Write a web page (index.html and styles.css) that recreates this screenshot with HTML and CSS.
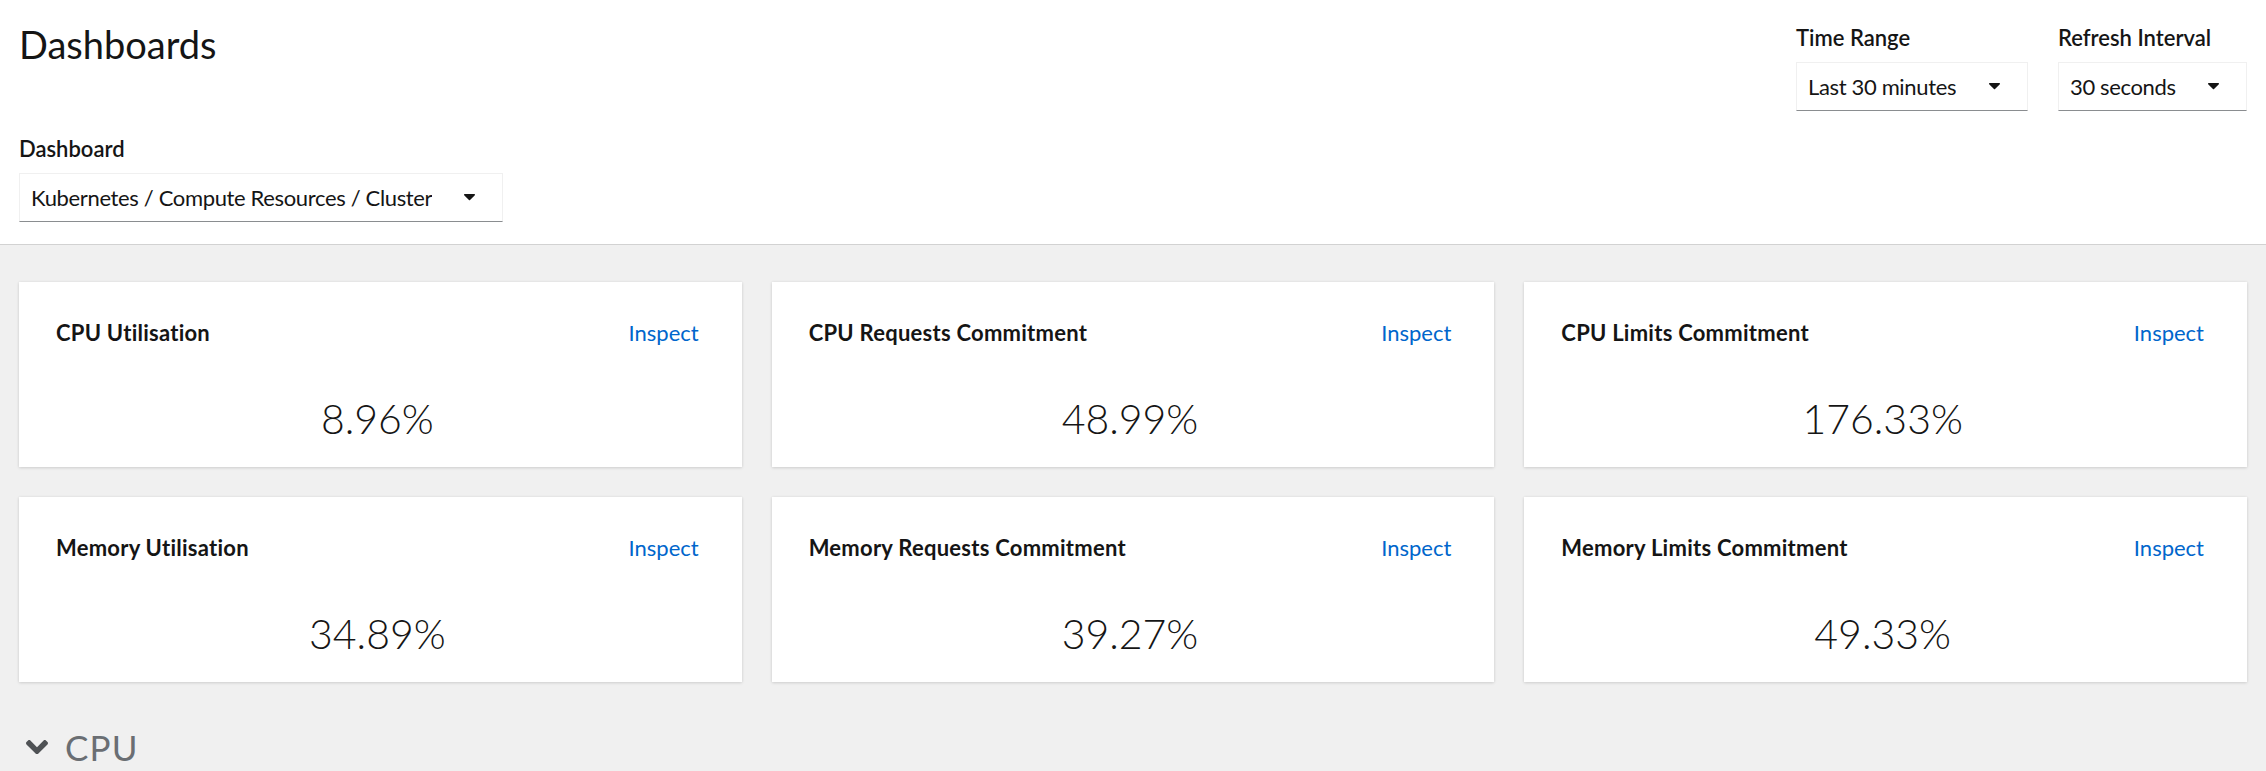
FILE: index.html
```html
<!DOCTYPE html>
<html lang="en">
<head>
<meta charset="utf-8">
<title>Dashboards</title>
<link rel="stylesheet" href="styles.css">
</head>
<body>
<header class="page-header">
  <div class="header-top">
    <h1 class="page-title">Dashboards</h1>
    <div class="header-controls">
      <div class="field">
        <label class="field-label">Time Range</label>
        <button class="dropdown dropdown--time" type="button">
          <span class="dropdown-text">Last 30 minutes</span>
          <svg class="caret" viewBox="13 192 294 168" aria-hidden="true"><path d="M31.3 192h257.3c17.8 0 26.7 21.5 14.1 34.1L174.1 354.8c-7.8 7.8-20.5 7.8-28.3 0L17.2 226.1C4.6 213.5 13.5 192 31.3 192z"/></svg>
        </button>
      </div>
      <div class="field">
        <label class="field-label">Refresh Interval</label>
        <button class="dropdown dropdown--refresh" type="button">
          <span class="dropdown-text">30 seconds</span>
          <svg class="caret" viewBox="13 192 294 168" aria-hidden="true"><path d="M31.3 192h257.3c17.8 0 26.7 21.5 14.1 34.1L174.1 354.8c-7.8 7.8-20.5 7.8-28.3 0L17.2 226.1C4.6 213.5 13.5 192 31.3 192z"/></svg>
        </button>
      </div>
    </div>
  </div>
  <div class="field field--dashboard">
    <label class="field-label">Dashboard</label>
    <button class="dropdown dropdown--dashboard" type="button">
      <span class="dropdown-text">Kubernetes / Compute Resources / Cluster</span>
      <svg class="caret" viewBox="13 192 294 168" aria-hidden="true"><path d="M31.3 192h257.3c17.8 0 26.7 21.5 14.1 34.1L174.1 354.8c-7.8 7.8-20.5 7.8-28.3 0L17.2 226.1C4.6 213.5 13.5 192 31.3 192z"/></svg>
    </button>
  </div>
</header>

<main class="page-body">
  <div class="card-grid">
    <section class="card">
      <div class="card-head"><h2 class="card-title">CPU Utilisation</h2><a class="card-link" href="#">Inspect</a></div>
      <div class="card-value">8.96%</div>
    </section>
    <section class="card">
      <div class="card-head"><h2 class="card-title">CPU Requests Commitment</h2><a class="card-link" href="#">Inspect</a></div>
      <div class="card-value">48.99%</div>
    </section>
    <section class="card">
      <div class="card-head"><h2 class="card-title">CPU Limits Commitment</h2><a class="card-link" href="#">Inspect</a></div>
      <div class="card-value">176.33%</div>
    </section>
    <section class="card">
      <div class="card-head"><h2 class="card-title">Memory Utilisation</h2><a class="card-link" href="#">Inspect</a></div>
      <div class="card-value">34.89%</div>
    </section>
    <section class="card">
      <div class="card-head"><h2 class="card-title">Memory Requests Commitment</h2><a class="card-link" href="#">Inspect</a></div>
      <div class="card-value">39.27%</div>
    </section>
    <section class="card">
      <div class="card-head"><h2 class="card-title">Memory Limits Commitment</h2><a class="card-link" href="#">Inspect</a></div>
      <div class="card-value">49.33%</div>
    </section>
  </div>

  <div class="section-toggle">
    <svg class="chevron" viewBox="0 152 320 208" aria-hidden="true"><path d="M143 352.3L7 216.3c-9.4-9.4-9.4-24.6 0-33.9l22.6-22.6c9.4-9.4 24.6-9.4 33.9 0l96.4 96.4 96.4-96.4c9.4-9.4 24.6-9.4 33.9 0l22.6 22.6c9.4 9.4 9.4 24.6 0 33.9l-136 136c-9.2 9.4-24.4 9.4-33.8 0z"/></svg>
    <span class="section-title">CPU</span>
  </div>
</main>
</body>
</html>
```

FILE: styles.css
```css
* {
  box-sizing: border-box;
}

html, body {
  margin: 0;
  padding: 0;
}

body {
  background: #f0f0f0;
  color: #151515;
  font-family: Lato, "Liberation Sans", sans-serif;
  min-height: 771px;
}

/* Header */
.page-header {
  background: #ffffff;
  height: 245px;
  border-bottom: 1px solid #d2d2d2;
  padding: 22px 19px 0 19px;
}

.header-top {
  display: flex;
  justify-content: space-between;
  align-items: flex-start;
}

.page-title {
  margin: 0;
  font-size: 38px;
  font-weight: 400;
  line-height: 44px;
  color: #151515;
}

.header-controls {
  display: flex;
  gap: 30px;
  margin-top: 3px;
}

.field {
  display: flex;
  flex-direction: column;
}

.field--dashboard {
  margin-top: 25px;
}

.field-label {
  font-size: 22px;
  font-weight: 600;
  line-height: 25px;
  margin-bottom: 12px;
  color: #151515;
}

.dropdown {
  display: flex;
  align-items: center;
  justify-content: space-between;
  gap: 12px;
  height: 49px;
  padding: 0 27px 0 11px;
  background: #ffffff;
  border: 1px solid #f0f0f0;
  border-bottom-color: #8a8d90;
  font-family: inherit;
  font-size: 22px;
  letter-spacing: -0.35px;
  color: #151515;
  text-align: left;
  cursor: pointer;
}

.dropdown--time {
  width: 232px;
}

.dropdown--refresh {
  width: 189px;
}

.dropdown--dashboard {
  width: 484px;
}

.dropdown-text {
  white-space: nowrap;
  overflow: hidden;
  min-width: 0;
}

.caret {
  width: 11px;
  height: 6.3px;
  fill: #151515;
  flex: none;
}

/* Body */
.page-body {
  padding: 37px 19px 0 19px;
}

.card-grid {
  display: grid;
  grid-template-columns: repeat(3, 1fr);
  grid-auto-rows: 185px;
  gap: 30px;
}

.card {
  background: #ffffff;
  box-shadow: 0 1px 3px 0 rgba(3, 3, 3, 0.12), 0 0 3px 0 rgba(3, 3, 3, 0.06);
  padding: 38px 43px 0 37px;
  display: flex;
  flex-direction: column;
}

.card-head {
  display: flex;
  justify-content: space-between;
  align-items: baseline;
}

.card-title {
  margin: 0;
  font-size: 22px;
  font-weight: 700;
  letter-spacing: 0.25px;
  line-height: 25px;
  color: #151515;
}

.card-link {
  font-size: 22px;
  line-height: 25px;
  color: #0066cc;
  text-decoration: none;
}

.card-value {
  margin-top: 49px;
  text-align: center;
  font-size: 41px;
  font-weight: 300;
  line-height: 1.2;
  color: #151515;
}

.section-toggle {
  display: flex;
  align-items: center;
  gap: 17px;
  margin-top: 44px;
  padding-left: 7px;
}

.chevron {
  width: 22px;
  height: 14.3px;
  fill: #4f5255;
  flex: none;
}

.section-title {
  font-size: 35px;
  font-weight: 400;
  letter-spacing: 1.2px;
  line-height: 1.2;
  color: #6a6e73;
}
```
